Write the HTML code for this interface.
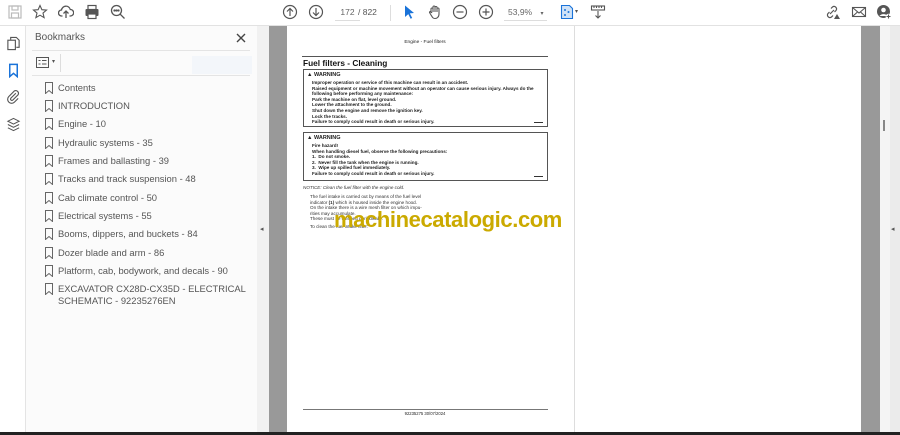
<!DOCTYPE html>
<html><head><meta charset="utf-8"><style>
*{margin:0;padding:0;box-sizing:border-box}
body{width:900px;height:435px;overflow:hidden;background:#fff;font-family:"Liberation Sans",sans-serif;position:relative}
.a{position:absolute}
.tb{left:0;top:0;width:900px;height:26px;background:#fff;border-bottom:1px solid #e2e2e2}
.ic{position:absolute;top:4px}
.rail{left:0;top:26px;width:26px;height:406px;background:#fff;border-right:1px solid #e4e4e4}
.panel{left:26px;top:26px;width:231px;height:406px;background:#fbfbfb}
.bm{position:absolute;left:45px;font-size:9.4px;color:#555;font-family:"Liberation Sans",sans-serif;line-height:12px}
.bm svg{position:absolute;left:-1px;top:0}
.bm span{position:absolute;left:13px;top:0;white-space:nowrap}
.pg{font-family:"Liberation Sans",sans-serif;color:#222}
.w{position:absolute;left:303px;width:245px;border:1px solid #555;background:#fff}
.w p{font-size:4.6px;font-weight:bold;line-height:5.6px;margin-left:8px;white-space:nowrap}
.w h5{font-size:5.5px;margin:2px 0 2px 3px}
.t{font-size:4.6px;line-height:5.6px;white-space:nowrap;position:absolute;color:#333}
</style></head><body>
<div class="a tb">
<svg class="ic" style="left:7px" width="16" height="16" viewBox="0 0 16 16" fill="none" stroke="#bbb" stroke-width="1.2"><rect x="2" y="2" width="12" height="12"/><rect x="5" y="2" width="6" height="4"/><rect x="4.5" y="9" width="7" height="5"/></svg>
<svg class="ic" style="left:32px" width="16" height="16" viewBox="0 0 16 16" fill="none" stroke="#555" stroke-width="1.1"><path d="M8 1.5l1.9 4.2 4.6.4-3.5 3 1.1 4.5L8 11.2 3.9 13.6 5 9.1 1.5 6.1l4.6-.4z"/></svg>
<svg class="ic" style="left:58px" width="16" height="16" viewBox="0 0 16 16" fill="none" stroke="#555" stroke-width="1.3"><path d="M4.5 12H3.5a3 3 0 0 1 0-6 4.5 4.5 0 0 1 8.8-.5A3 3 0 0 1 12.5 12h-1"/><path d="M8 14V7M5.5 9.5L8 7l2.5 2.5"/></svg>
<svg class="ic" style="left:84px" width="16" height="16" viewBox="0 0 16 16"><rect x="4" y="1.5" width="8" height="4" fill="none" stroke="#555" stroke-width="1.2"/><rect x="1.5" y="5" width="13" height="7" rx="1" fill="#555"/><rect x="4" y="10" width="8" height="4.5" fill="#fff" stroke="#555" stroke-width="1.2"/></svg>
<svg class="ic" style="left:110px" width="16" height="16" viewBox="0 0 16 16" fill="none" stroke="#555" stroke-width="1.3"><circle cx="6.5" cy="6.5" r="5"/><path d="M10.2 10.2L14.5 14.5"/><circle cx="4.5" cy="6.5" r=".5" fill="#555"/><circle cx="6.5" cy="6.5" r=".5" fill="#555"/><circle cx="8.5" cy="6.5" r=".5" fill="#555"/></svg>
<svg class="ic" style="left:282px" width="16" height="16" viewBox="0 0 16 16" fill="none" stroke="#555" stroke-width="1.2"><circle cx="8" cy="8" r="6.5"/><path d="M8 12V4.5M5 7.5l3-3 3 3"/></svg>
<svg class="ic" style="left:308px" width="16" height="16" viewBox="0 0 16 16" fill="none" stroke="#555" stroke-width="1.2"><circle cx="8" cy="8" r="6.5"/><path d="M8 4v7.5M5 8.5l3 3 3-3"/></svg>
<div class="a" style="left:335px;top:7px;width:25px;font-size:8.5px;color:#666;text-align:center;border-bottom:1px solid #ddd;height:14px">172</div>
<div class="a" style="left:358px;top:7px;font-size:8.5px;color:#555">/ 822</div>
<div class="a" style="left:390px;top:5px;width:1px;height:16px;background:#ddd"></div>
<svg class="ic" style="left:401px" width="16" height="16" viewBox="0 0 16 16"><path d="M4 1.5l9 7.5-4.2.4 2.4 4.6-1.6.8-2.3-4.7L4 13z" fill="#1a73d9"/></svg>
<svg class="ic" style="left:427px" width="16" height="16" viewBox="0 0 16 16" fill="none" stroke="#555" stroke-width="1.1"><path d="M4 9V5a1 1 0 0 1 2 0v3V3a1 1 0 0 1 2 0v5V3.5a1 1 0 0 1 2 0V8V5a1 1 0 0 1 2 0v5c0 3-2 4.5-4 4.5S5.5 13.5 4 11L2.5 8.5a1 1 0 0 1 1.5-1L5 9"/></svg>
<svg class="ic" style="left:452px" width="16" height="16" viewBox="0 0 16 16" fill="none" stroke="#555" stroke-width="1.2"><circle cx="8" cy="8" r="6.5"/><path d="M4.5 8h7"/></svg>
<svg class="ic" style="left:478px" width="16" height="16" viewBox="0 0 16 16" fill="none" stroke="#555" stroke-width="1.2"><circle cx="8" cy="8" r="6.5"/><path d="M4.5 8h7M8 4.5v7"/></svg>
<div class="a" style="left:504px;top:7px;width:43px;font-size:8.5px;color:#666;border-bottom:1px solid #ddd;height:14px;padding-left:4px">53,9% <span style="margin-left:6px;font-size:6px">▾</span></div>
<svg class="ic" style="left:559px" width="16" height="16" viewBox="0 0 16 16"><path d="M2.5 1.5h8l3 3v10h-11z" fill="#cfe2f7" stroke="#1a73d9" stroke-width="1.1"/><circle cx="6" cy="6" r="1" fill="#1a73d9"/><circle cx="9.5" cy="8" r="1" fill="#1a73d9"/><circle cx="6" cy="11" r="1" fill="#1a73d9"/></svg>
<div class="a" style="left:575px;top:8px;font-size:6px;color:#555">▾</div>
<svg class="ic" style="left:590px" width="16" height="16" viewBox="0 0 16 16" fill="none" stroke="#555" stroke-width="1.1"><rect x="1.5" y="2" width="13" height="4"/><path d="M4 2v2M6.5 2v2M9 2v2M11.5 2v2M8 7v7M5.5 11.5L8 14l2.5-2.5"/></svg>
<svg class="ic" style="left:824px" width="16" height="16" viewBox="0 0 16 16" fill="none" stroke="#555" stroke-width="1.2"><path d="M6 10l4-4M7 4.5l1.5-1.5a2.5 2.5 0 0 1 3.5 3.5L10.5 8M9 11.5L7.5 13a2.5 2.5 0 0 1-3.5-3.5L5.5 8"/><path d="M10 15l3-5 3 5z" fill="#555" stroke="none"/></svg>
<svg class="ic" style="left:851px" width="16" height="16" viewBox="0 0 16 16" fill="none" stroke="#555" stroke-width="1.1"><rect x="1.5" y="3.5" width="13" height="9"/><path d="M1.5 3.5L8 9l6.5-5.5M1.5 12.5l5-4.5M14.5 12.5l-5-4.5"/></svg>
<svg class="ic" style="left:876px" width="16" height="16" viewBox="0 0 16 16"><circle cx="7.5" cy="7.5" r="6.5" fill="#555"/><circle cx="7.5" cy="6" r="2.3" fill="#fff"/><path d="M3.5 12a4.5 3.5 0 0 1 8 0" fill="#fff"/><circle cx="12.5" cy="12.5" r="2.8" fill="#fff"/><path d="M12.5 10.5v4M10.5 12.5h4" stroke="#555" stroke-width="1.1"/></svg>
</div>
<div class="a rail">
<svg class="a" style="left:6px;top:10px" width="15" height="15" viewBox="0 0 16 16" fill="none" stroke="#555" stroke-width="1.2"><path d="M5 4V1.5h6l3 3V12h-3"/><rect x="2" y="4.5" width="8" height="10"/></svg>
<svg class="a" style="left:6px;top:37px" width="15" height="15" viewBox="0 0 16 16" fill="none" stroke="#1a73d9" stroke-width="1.6"><path d="M4 1.5h8v13l-4-3.5-4 3.5z"/></svg>
<svg class="a" style="left:6px;top:63px" width="15" height="15" viewBox="0 0 16 16" fill="none" stroke="#555" stroke-width="1.2"><path d="M10.5 4.5l-5.5 5.5a1.5 1.5 0 0 0 2 2l6-6a3 3 0 0 0-4-4l-6 6a4.2 4.2 0 0 0 6 6l4-4"/></svg>
<svg class="a" style="left:6px;top:91px" width="15" height="15" viewBox="0 0 16 16" fill="none" stroke="#555" stroke-width="1.1"><path d="M8 1.5l6 3-6 3-6-3zM2 8l6 3 6-3M2 11.5l6 3 6-3"/></svg>
</div>
<div class="a panel">
<div class="a" style="left:9px;top:6px;font-size:10px;color:#555">Bookmarks</div>
<svg class="a" style="left:210px;top:7px" width="10" height="10" viewBox="0 0 10 10" stroke="#444" stroke-width="1.4"><path d="M1 1l8 8M9 1l-8 8"/></svg>
<div class="a" style="left:6px;top:24px;width:218px;height:1px;background:#e4e4e4"></div>
<svg class="a" style="left:10px;top:31px" width="13" height="11" viewBox="0 0 13 11" fill="none" stroke="#555" stroke-width="1"><rect x=".5" y=".5" width="12" height="10"/><path d="M2.5 3.5h2M6 3.5h4.5M2.5 7h2M6 7h4.5"/></svg>
<div class="a" style="left:26px;top:32px;font-size:6px;color:#555">▾</div>
<div class="a" style="left:34px;top:28px;width:1px;height:18px;background:#ddd"></div>
<div class="a" style="left:166px;top:30px;width:60px;height:18px;background:#f3f6fa"></div>
<div class="a" style="left:6px;top:49px;width:218px;height:1px;background:#e4e4e4"></div>
</div>
<div class="a" style="left:257px;top:26px;width:12px;height:406px;background:#f1f1f1"></div>
<div class="a" style="left:260px;top:225px;font-size:7px;color:#555">◂</div>
<div class="a" style="left:269px;top:26px;width:18px;height:406px;background:#999"></div>
<div class="a" style="left:287px;top:26px;width:574px;height:406px;background:#fff"></div>
<div class="a" style="left:574px;top:26px;width:1px;height:406px;background:#ddd"></div>
<div class="a" style="left:861px;top:26px;width:19px;height:406px;background:#999"></div>
<div class="a" style="left:880px;top:26px;width:10px;height:406px;background:#f4f4f4"></div>
<div class="a" style="left:890px;top:26px;width:10px;height:406px;background:#ebebeb"></div>
<div class="a" style="left:883px;top:120px;width:2px;height:11px;background:#888"></div>
<div class="a" style="left:891px;top:225px;font-size:7px;color:#555">◂</div>
<div class="a" style="left:0;top:432px;width:900px;height:3px;background:#222"></div>

<div class="bm" style="top:82px"><svg width="10" height="12" viewBox="0 0 10 12" fill="none" stroke="#666" stroke-width="1"><path d="M1.5 .5h7v11L5 8.5 1.5 11.5z"/></svg><span>Contents</span></div>
<div class="bm" style="top:100px"><svg width="10" height="12" viewBox="0 0 10 12" fill="none" stroke="#666" stroke-width="1"><path d="M1.5 .5h7v11L5 8.5 1.5 11.5z"/></svg><span>INTRODUCTION</span></div>
<div class="bm" style="top:118px"><svg width="10" height="12" viewBox="0 0 10 12" fill="none" stroke="#666" stroke-width="1"><path d="M1.5 .5h7v11L5 8.5 1.5 11.5z"/></svg><span>Engine - 10</span></div>
<div class="bm" style="top:137px"><svg width="10" height="12" viewBox="0 0 10 12" fill="none" stroke="#666" stroke-width="1"><path d="M1.5 .5h7v11L5 8.5 1.5 11.5z"/></svg><span>Hydraulic systems - 35</span></div>
<div class="bm" style="top:155px"><svg width="10" height="12" viewBox="0 0 10 12" fill="none" stroke="#666" stroke-width="1"><path d="M1.5 .5h7v11L5 8.5 1.5 11.5z"/></svg><span>Frames and ballasting - 39</span></div>
<div class="bm" style="top:173px"><svg width="10" height="12" viewBox="0 0 10 12" fill="none" stroke="#666" stroke-width="1"><path d="M1.5 .5h7v11L5 8.5 1.5 11.5z"/></svg><span>Tracks and track suspension - 48</span></div>
<div class="bm" style="top:192px"><svg width="10" height="12" viewBox="0 0 10 12" fill="none" stroke="#666" stroke-width="1"><path d="M1.5 .5h7v11L5 8.5 1.5 11.5z"/></svg><span>Cab climate control - 50</span></div>
<div class="bm" style="top:210px"><svg width="10" height="12" viewBox="0 0 10 12" fill="none" stroke="#666" stroke-width="1"><path d="M1.5 .5h7v11L5 8.5 1.5 11.5z"/></svg><span>Electrical systems - 55</span></div>
<div class="bm" style="top:228px"><svg width="10" height="12" viewBox="0 0 10 12" fill="none" stroke="#666" stroke-width="1"><path d="M1.5 .5h7v11L5 8.5 1.5 11.5z"/></svg><span>Booms, dippers, and buckets - 84</span></div>
<div class="bm" style="top:247px"><svg width="10" height="12" viewBox="0 0 10 12" fill="none" stroke="#666" stroke-width="1"><path d="M1.5 .5h7v11L5 8.5 1.5 11.5z"/></svg><span>Dozer blade and arm - 86</span></div>
<div class="bm" style="top:265px"><svg width="10" height="12" viewBox="0 0 10 12" fill="none" stroke="#666" stroke-width="1"><path d="M1.5 .5h7v11L5 8.5 1.5 11.5z"/></svg><span>Platform, cab, bodywork, and decals - 90</span></div>
<div class="bm" style="top:283px"><svg width="10" height="12" viewBox="0 0 10 12" fill="none" stroke="#666" stroke-width="1"><path d="M1.5 .5h7v11L5 8.5 1.5 11.5z"/></svg><span>EXCAVATOR CX28D-CX35D - ELECTRICAL<br>SCHEMATIC - 92235276EN</span></div>

<div class="pg">
<div class="a" style="left:380px;top:40px;width:90px;text-align:center;font-size:4.8px">Engine - Fuel filters</div>
<div class="a" style="left:302px;top:56px;width:246px;height:1px;background:#555"></div>
<div class="a" style="left:303px;top:58px;font-size:8.3px;font-weight:bold;color:#111">Fuel filters - Cleaning</div>
<div class="w" style="top:69px;height:58px"><h5>▲ WARNING</h5>
<p>Improper operation or service of this machine can result in an accident.</p>
<p>Raised equipment or machine movement without an operator can cause serious injury. Always do the</p>
<p>following before performing any maintenance:</p>
<p>Park the machine on flat, level ground.</p>
<p>Lower the attachment to the ground.</p>
<p>Shut down the engine and remove the ignition key.</p>
<p>Lock the tracks.</p>
<p>Failure to comply could result in death or serious injury.</p>
<div class="a" style="right:4px;bottom:3px;width:9px;height:1.5px;background:#333"></div></div>
<div class="w" style="top:132px;height:49px"><h5>▲ WARNING</h5>
<p>Fire hazard!</p>
<p>When handling diesel fuel, observe the following precautions:</p>
<p>1.&nbsp; Do not smoke.</p>
<p>2.&nbsp; Never fill the tank when the engine is running.</p>
<p>3.&nbsp; Wipe up spilled fuel immediately.</p>
<p>Failure to comply could result in death or serious injury.</p>
<div class="a" style="right:4px;bottom:3px;width:9px;height:1.5px;background:#333"></div></div>
<div class="t" style="left:303px;top:185px;font-style:italic">NOTICE: Clean the fuel filter with the engine cold.</div>
<div class="t" style="left:310px;top:194px">The fuel intake is carried out by means of the fuel level<br>indicator <b>(1)</b> which is housed inside the engine hood.<br>On the intake there is a wire mesh filter on which impu-<br>rities may accumulate.<br>These must be cleaned periodically.</div>
<div class="t" style="left:310px;top:224px">To clean the fuel intake filter:</div>
<div class="a" style="left:334px;top:207px;font-size:22px;font-weight:bold;color:#cbaa00;letter-spacing:-.4px;white-space:nowrap">machinecatalogic.com</div>
<div class="a" style="left:303px;top:409px;width:245px;height:1px;background:#777"></div>
<div class="a" style="left:380px;top:411px;width:90px;text-align:center;font-size:4.2px">92235275 30/07/2024</div>
</div>
</body></html>
